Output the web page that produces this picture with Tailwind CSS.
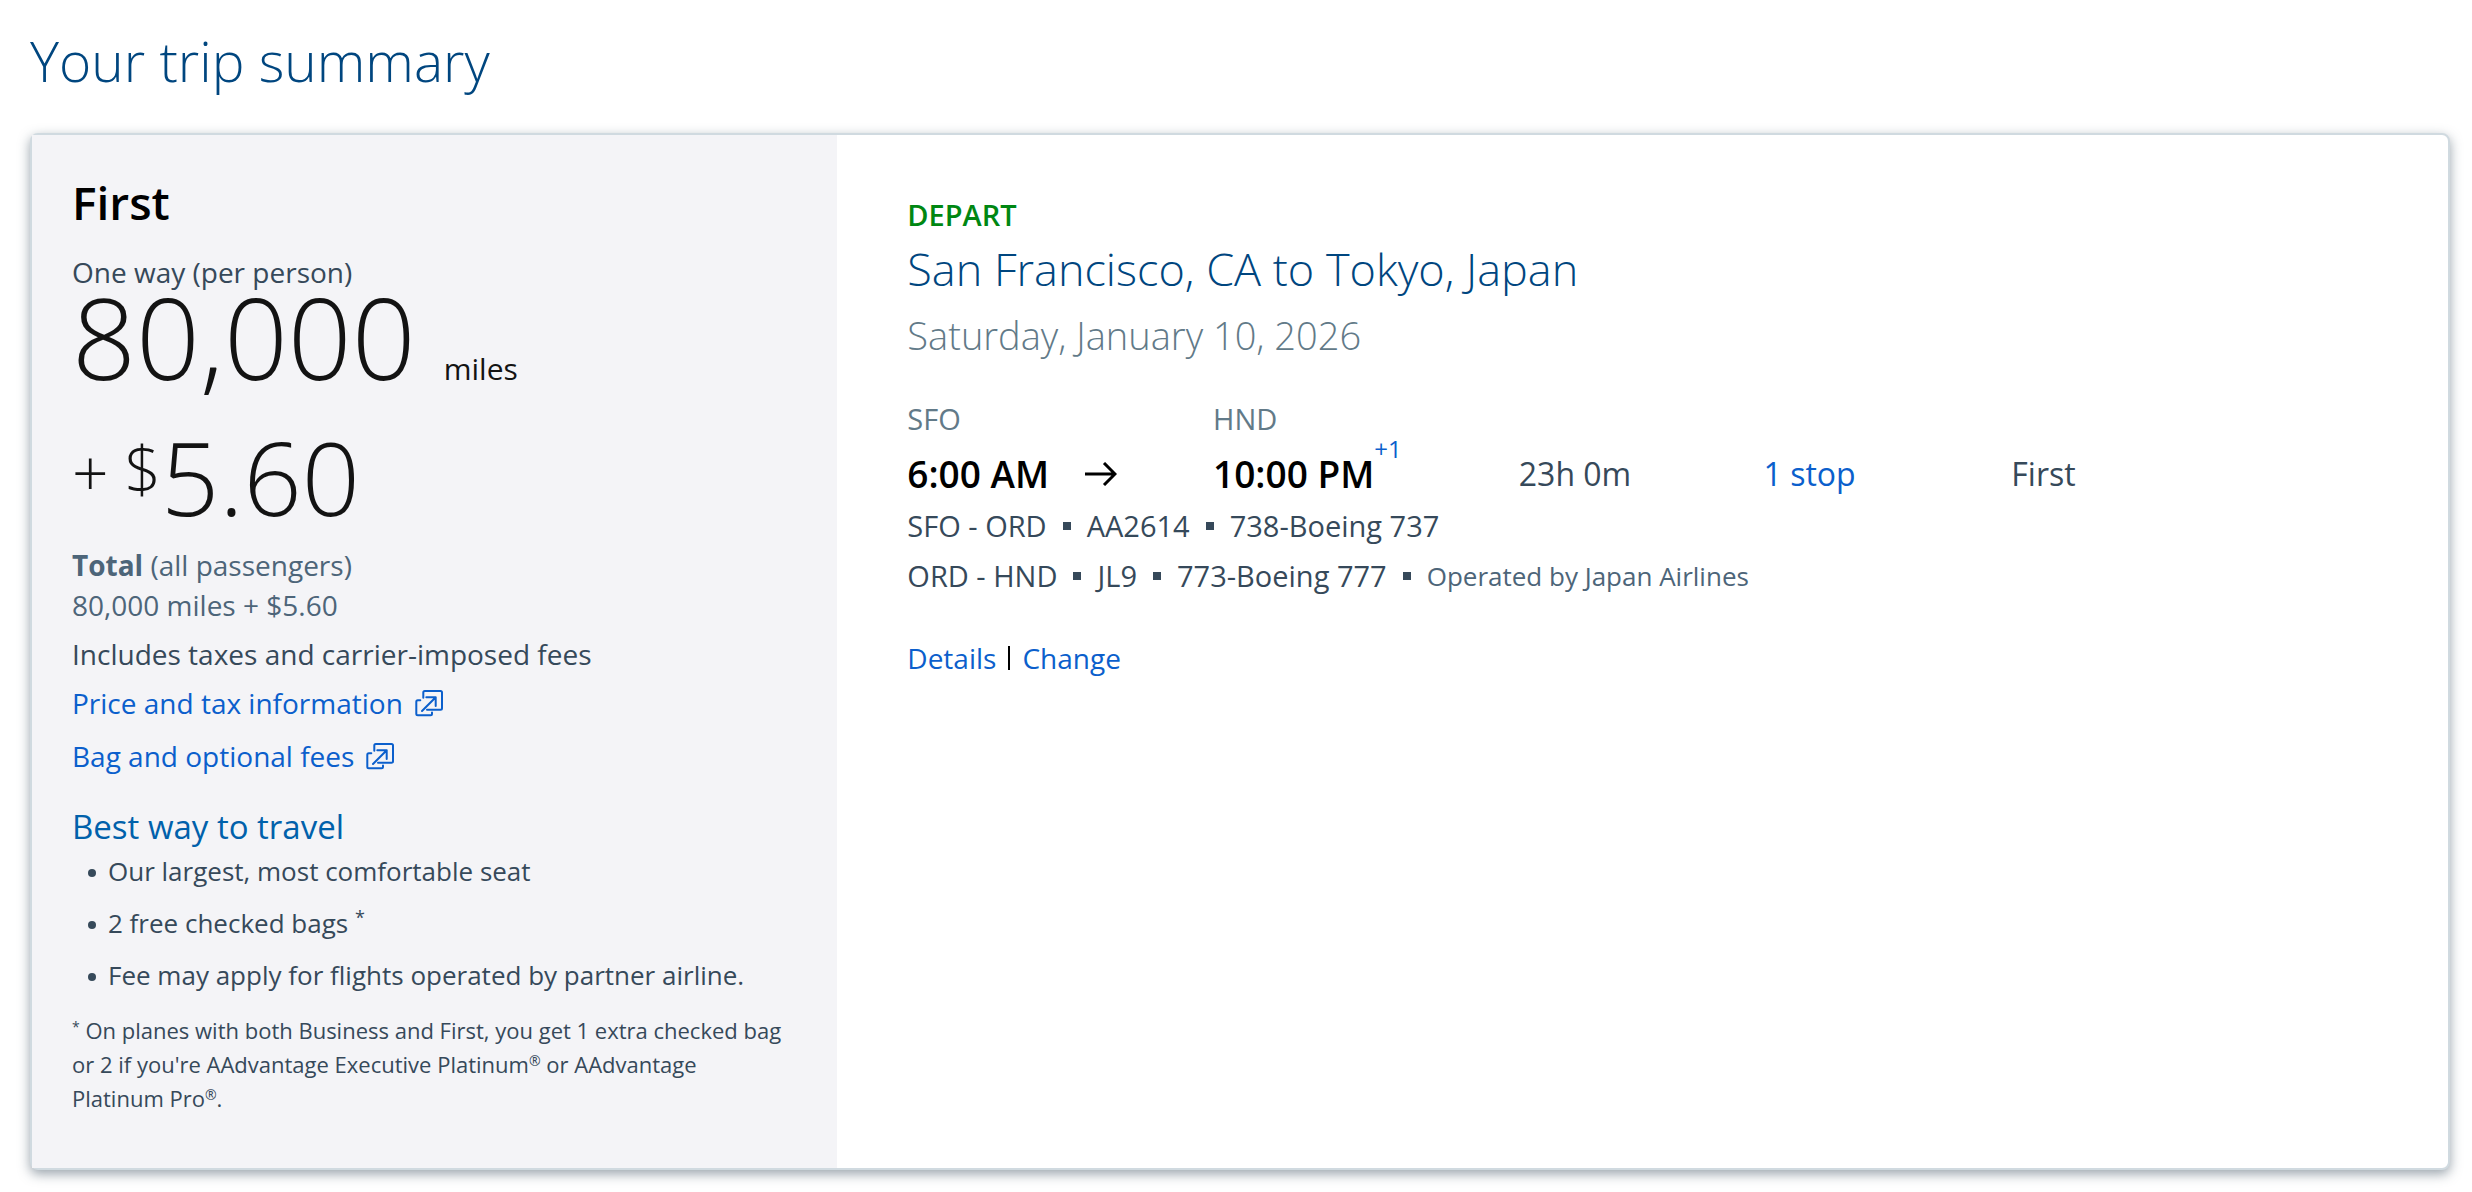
<!DOCTYPE html>
<html lang="en">
<head>
<meta charset="utf-8">
<title>Your trip summary</title>
<script src="https://cdn.jsdelivr.net/npm/@tailwindcss/browser@4"></script>
</head>
<body class="bg-white font-['Open_Sans',sans-serif] text-[28px] leading-10 text-[#36495a]">
<main class="pt-6 pr-[22px] pb-5 pl-[30px]">
  <h1 class="text-[55px] leading-[74px] font-light text-[#00467f]">Your trip summary</h1>

  <div class="mt-[35px] flex rounded-lg border-2 border-[#d0dae0] bg-white shadow-[0_4px_12px_rgba(54,73,90,0.5)]">
    <section class="w-1/3 bg-[#f4f4f7] pt-[35px] pr-12 pb-[53px] pl-10">
      <h2 class="text-[46px] leading-[64px] font-semibold text-black">First</h2>
      <p class="mt-5 leading-9">One way (per person)</p>
      <p class="flex items-baseline gap-7 font-light text-[#131313]">
        <span class="text-[112px] leading-[94px]">80,000</span>
        <span class="text-[30px] leading-9 font-normal">miles</span>
      </p>
      <p class="mt-9 flex items-start font-light text-[#131313]">
        <span class="text-[64px] leading-[98px]">+</span>
        <span class="ml-4 text-[64px] leading-[92px]">$</span>
        <span class="text-[102px] leading-[108px]">5.60</span>
      </p>
      <p class="mt-[14px] text-[#4d6579]"><strong class="font-bold">Total</strong> (all passengers)</p>
      <p class="text-[#4d6579]">80,000 miles + $5.60</p>
      <p class="mt-[9px]">Includes taxes and carrier-imposed fees</p>
      <p class="mt-[9px]">
        <a href="#" class="inline-flex items-center gap-3 text-[#0b5fcc]">Price and tax information
          <svg class="size-7" viewBox="0 0 28 28" fill="none" stroke="currentColor" stroke-width="2" stroke-linecap="round" stroke-linejoin="round" aria-hidden="true"><path d="M8.300 8.700V3.500a1.500 1.500 0 0 1 1.500-1.500h15.700a1.500 1.500 0 0 1 1.500 1.500v15.700a1.500 1.500 0 0 1-1.500 1.500H12M5.300 11.300H2.800a1.500 1.500 0 0 0-1.500 1.500v12a1.500 1.500 0 0 0 1.500 1.500h12.700a1.500 1.500 0 0 0 1.500-1.500v-1.200M7 22 20.700 8.300M11.300 8.300h9.400V17"/></svg>
        </a>
      </p>
      <p class="mt-[13px]">
        <a href="#" class="inline-flex items-center gap-3 text-[#0b5fcc]">Bag and optional fees
          <svg class="size-7" viewBox="0 0 28 28" fill="none" stroke="currentColor" stroke-width="2" stroke-linecap="round" stroke-linejoin="round" aria-hidden="true"><path d="M8.300 8.700V3.500a1.500 1.500 0 0 1 1.500-1.500h15.700a1.500 1.500 0 0 1 1.500 1.500v15.700a1.500 1.500 0 0 1-1.500 1.500H12M5.300 11.300H2.800a1.500 1.500 0 0 0-1.500 1.500v12a1.500 1.500 0 0 0 1.500 1.500h12.700a1.500 1.500 0 0 0 1.500-1.500v-1.200M7 22 20.700 8.300M11.300 8.300h9.400V17"/></svg>
        </a>
      </p>
      <h3 class="mt-[27px] text-[33px] leading-[48px] text-[#0061ab]">Best way to travel</h3>
      <ul class="flex flex-col gap-3 pl-4 text-[26px]">
        <li class="flex items-center gap-3"><span class="mt-1 size-2 rounded-full bg-current"></span>Our largest, most comfortable seat</li>
        <li class="flex items-center gap-3"><span class="mt-1 size-2 rounded-full bg-current"></span><span>2 free checked bags <sup class="text-[18px]">*</sup></span></li>
        <li class="flex items-center gap-3"><span class="mt-1 size-2 rounded-full bg-current"></span>Fee may apply for flights operated by partner airline.</li>
      </ul>
      <p class="mt-[18px] text-[22px] leading-[34px]"><sup class="text-[14px]">*</sup> On planes with both Business and First, you get 1 extra checked bag or 2 if you're AAdvantage Executive Platinum<sup class="text-[14px]">®</sup> or AAdvantage Platinum Pro<sup class="text-[14px]">®</sup>.</p>
    </section>

    <section class="flex-1 pt-[60px] pr-10 pl-[70px]">
      <p class="text-[29px] font-semibold text-[#008712]">DEPART</p>
      <h2 class="mt-[6px] text-[45px] leading-[56px] font-light text-[#00467f]">San Francisco, CA to Tokyo, Japan</h2>
      <p class="mt-3 text-[38px] leading-[52px] font-light text-[#627a88]">Saturday, January 10, 2026</p>

      <div class="mt-[35px] grid grid-cols-[306fr_306fr_245fr_248fr_397fr] items-end text-[32px] leading-[64px]">
        <div>
          <p class="text-[29px] leading-[46px] text-[#627a88]">SFO</p>
          <p class="flex items-center gap-9 text-[37px] font-semibold text-black">6:00 AM
            <svg class="h-6 w-8" viewBox="0 0 32 24" fill="none" stroke="currentColor" stroke-width="3" aria-hidden="true"><path d="M0 12h30M19 1l11 11-11 11"/></svg>
          </p>
        </div>
        <div>
          <p class="text-[29px] leading-[46px] text-[#627a88]">HND</p>
          <p class="flex items-start text-[37px] font-semibold text-black">10:00 PM<span class="text-[24px] leading-[14px] font-normal text-[#0b5fcc]">+1</span></p>
        </div>
        <p>23h 0m</p>
        <p><a href="#" class="text-[#0b5fcc]">1 stop</a></p>
        <p>First</p>
      </div>

      <ul class="flex flex-col gap-[10px] text-[29px]">
        <li class="flex items-center gap-4"><span>SFO - ORD</span><span class="size-2 bg-current"></span><span>AA2614</span><span class="size-2 bg-current"></span><span>738-Boeing 737</span></li>
        <li class="flex items-center gap-4"><span>ORD - HND</span><span class="size-2 bg-current"></span><span>JL9</span><span class="size-2 bg-current"></span><span>773-Boeing 777</span><span class="size-2 bg-current"></span><span class="text-[26px] text-[#4d6579]">Operated by Japan Airlines</span></li>
      </ul>

      <p class="mt-[42px] flex items-center gap-3">
        <a href="#" class="text-[#0b5fcc]">Details</a>
        <span class="h-6 w-[2px] bg-black"></span>
        <a href="#" class="text-[#0b5fcc]">Change</a>
      </p>
    </section>
  </div>
</main>
</body>
</html>
